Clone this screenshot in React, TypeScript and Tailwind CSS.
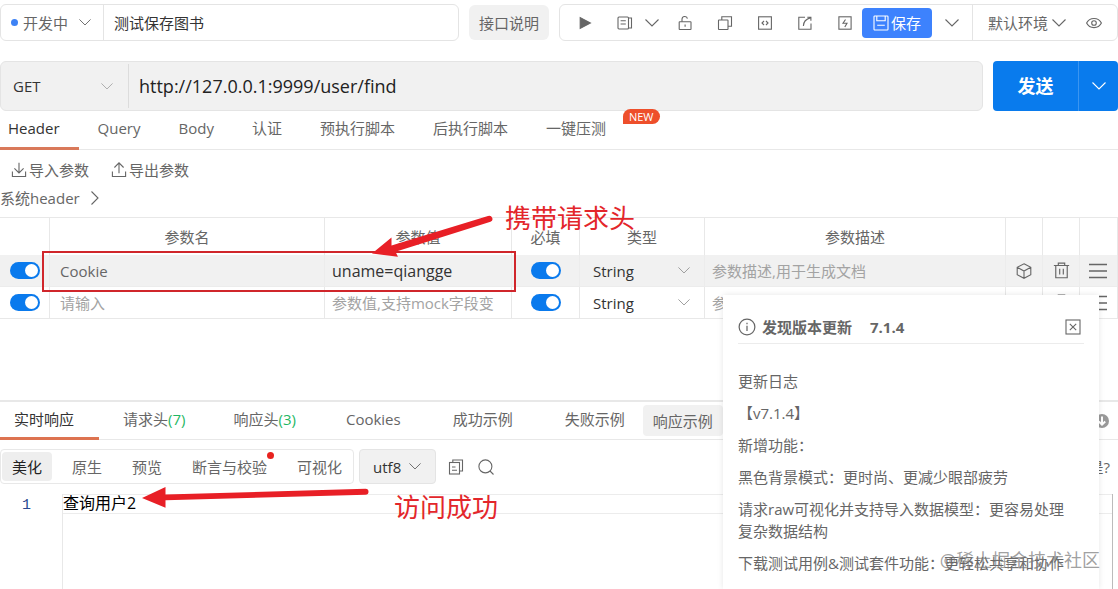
import React from "react";
import clsx from "clsx";

type IconProps = { className?: string; children: React.ReactNode };

const Icon = ({ className, children }: IconProps) => (
  <svg
    viewBox="0 0 16 16"
    fill="none"
    stroke="currentColor"
    strokeWidth="1.1"
    aria-hidden="true"
    className={clsx("shrink-0", className ?? "size-4")}
  >
    {children}
  </svg>
);

const Chevron = ({ className }: { className?: string }) => (
  <svg
    viewBox="0 0 14 8"
    fill="none"
    stroke="currentColor"
    strokeWidth="1.1"
    aria-hidden="true"
    className={clsx("shrink-0", className)}
  >
    <path d="M0.5 0.5 7 7l6.5-6.5" />
  </svg>
);

const PlayIcon = () => (
  <Icon>
    <path d="M3.2 2.6v10.8L13.4 8z" fill="currentColor" />
  </Icon>
);

const DocIcon = () => (
  <Icon>
    <rect x="1" y="2" width="10.5" height="12" rx="1" />
    <path d="M3.6 5.8h5.2M3.6 9h5.2M11.5 3h3v10h-3" />
  </Icon>
);

const LockIcon = () => (
  <Icon>
    <rect x="2.2" y="6.8" width="11.8" height="7.7" rx="0.5" />
    <path d="M5 6.8V4.2c0-3.2 5-3.6 5.4-.6M8.1 9.6v2.2" />
  </Icon>
);

const CopyIcon = () => (
  <Icon>
    <rect x="1.5" y="5" width="9.5" height="9.5" rx="0.5" />
    <path d="M4.8 5V1.8h9.7v9.4H11" />
  </Icon>
);

const CodeIcon = () => (
  <Icon>
    <rect x="1.6" y="1.8" width="12.8" height="12.4" />
    <path d="M7 6 5 8l2 2M9 6l2 2-2 2" />
  </Icon>
);

const ShareIcon = () => (
  <Icon>
    <path d="M8 2.3H1.8v11.9H14V8.5M6.4 11c0-4.5 2.5-7 7.4-8.4M10.3 2.3h3.6v3.4" />
  </Icon>
);

const BoltIcon = () => (
  <Icon>
    <rect x="1.9" y="1.8" width="12.2" height="12.4" />
    <path d="M8.5 4.5 6 8.3h4L7.8 12" />
  </Icon>
);

const SaveIcon = () => (
  <Icon>
    <rect x="1" y="1" width="14" height="14" rx="0.8" />
    <path d="M3.8 1v4.8h8.4V1M4.2 10.3h7.6" />
  </Icon>
);

const EyeIcon = () => (
  <Icon>
    <path d="M.6 8C3.6 1.9 12.4 1.9 15.4 8 12.4 14.1 3.6 14.1.6 8z" />
    <circle cx="8" cy="8" r="2.3" />
  </Icon>
);

const ImportIcon = () => (
  <Icon>
    <path d="M8 .8v10M3.4 6.3 8 10.9l4.6-4.6M1.4 9.5v5h13.2v-5" />
  </Icon>
);

const ExportIcon = () => (
  <Icon>
    <path d="M8 11.3V1M3.4 5.5 8 .9l4.6 4.6M1.4 9.5v5h13.2v-5" />
  </Icon>
);

const CubeIcon = () => (
  <Icon>
    <path d="M8 .8 14.8 4.3v7.4L8 15.3 1.2 11.7V4.3zM1.2 4.3 8 8l6.8-3.7M8 8v7.3" />
  </Icon>
);

const TrashIcon = () => (
  <Icon className="size-[17px]">
    <path d="M.8 3.3h14.4M5 3.3V1h6v2.3M2.6 3.3v11.5h10.8V3.3M6.3 6.3v5.5M9.7 6.3v5.5" />
  </Icon>
);

const MenuIcon = () => (
  <svg viewBox="0 0 18 16" fill="none" stroke="currentColor" strokeWidth="1.3" aria-hidden="true" className="h-4 w-[18px]">
    <path d="M0 1.5h18M0 8h18M0 14.5h18" />
  </svg>
);

const CloseIcon = () => (
  <Icon>
    <rect x="1" y="1" width="14" height="14" />
    <path d="m4.8 4.8 6.4 6.4M11.2 4.8l-6.4 6.4" />
  </Icon>
);

const InfoIcon = () => (
  <Icon className="size-[18px]">
    <circle cx="8" cy="8" r="7" />
    <path d="M8 6.8v4.8M8 4.2v1.3" />
  </Icon>
);

const CopyTextIcon = () => (
  <Icon>
    <path d="M4.8 3.5V1h9.7v11h-2.7" />
    <rect x="1.5" y="3.5" width="10" height="11.5" />
    <path d="M4 8h3.5M4 11.3h5" />
  </Icon>
);

const SearchIcon = () => (
  <Icon>
    <circle cx="7.4" cy="7.4" r="6.5" />
    <path d="m12 12 3.5 3.5" />
  </Icon>
);

const DownloadIcon = () => (
  <Icon>
    <circle cx="8" cy="8" r="7" fill="currentColor" stroke="none" />
    <path d="M8 3.5v8M4.8 8.5 8 11.7l3.2-3.2" stroke="#fff" strokeWidth="2" />
  </Icon>
);

const IconButton = ({ label, className, children }: { label: string; className?: string; children: React.ReactNode }) => (
  <button type="button" aria-label={label} className={clsx("flex items-center", className)}>
    {children}
  </button>
);

type SelectProps = { label: string; value: string; className?: string; chevron: string };

const Select = ({ label, value, className, chevron }: SelectProps) => (
  <span className="relative flex h-full items-center">
    <select aria-label={label} defaultValue={value} className={clsx("h-full appearance-none outline-none", className)}>
      <option>{value}</option>
    </select>
    <Chevron className={clsx("pointer-events-none absolute", chevron)} />
  </span>
);

const Switch = ({ label }: { label: string }) => (
  <input
    type="checkbox"
    role="switch"
    aria-label={label}
    defaultChecked
    className="block h-[17px] w-[30px] appearance-none rounded-full bg-gray-300 p-[2px] before:block before:size-[13px] before:rounded-full before:bg-white checked:bg-[#0a7aed] checked:before:ml-[13px]"
  />
);

const REQUEST_TABS = ["Header", "Query", "Body", "认证", "预执行脚本", "后执行脚本", "一键压测"];

const RESPONSE_TABS = [
  { label: "实时响应" },
  { label: "请求头", count: 7 },
  { label: "响应头", count: 3 },
  { label: "Cookies" },
  { label: "成功示例" },
  { label: "失败示例" },
];

const VIEW_MODES = ["美化", "原生", "预览", "断言与校验", "可视化"];

const PARAMS = [
  { name: "Cookie", value: "uname=qiangge" },
  { name: "", value: "" },
];

const CHANGELOG = [
  "更新日志",
  "【v7.1.4】",
  "新增功能：",
  "黑色背景模式：更时尚、更减少眼部疲劳",
  "请求raw可视化并支持导入数据模型：更容易处理复杂数据结构",
  "下载测试用例&测试套件功能：更轻松共享和协作",
];

const TopBar = () => (
  <header className="flex h-[37px] gap-[10px]">
    <div className="flex min-w-0 flex-1 rounded-md border border-[#e4e4e4]">
      <div className="flex items-center border-r border-[#e4e4e4] pl-[10px]">
        <span className="size-[7px] rounded-full bg-[#3d82f5]" />
        <Select label="接口状态" value="开发中" className="w-[85px] pl-[5px]" chevron="right-3 w-3" />
      </div>
      <input
        aria-label="接口名称"
        defaultValue="测试保存图书"
        className="min-w-0 flex-1 px-[10px] text-[#333] outline-none"
      />
    </div>
    <button type="button" className="my-px rounded-md bg-[#f1f1f1] px-[10px]">
      接口说明
    </button>
    <div className="flex items-center rounded-md border border-[#e4e4e4] pl-[17px]">
      <div className="flex items-center gap-6">
        <IconButton label="运行"><PlayIcon /></IconButton>
        <IconButton label="文档" className="-mr-1.5 gap-3">
          <DocIcon />
          <Chevron className="w-[14px]" />
        </IconButton>
        <IconButton label="锁定"><LockIcon /></IconButton>
        <IconButton label="复制"><CopyIcon /></IconButton>
        <IconButton label="代码"><CodeIcon /></IconButton>
        <IconButton label="分享"><ShareIcon /></IconButton>
        <IconButton label="快捷"><BoltIcon /></IconButton>
      </div>
      <button type="button" className="ml-[9px] flex h-[30px] w-[70px] items-center justify-center gap-0.5 rounded bg-[#3d82fd] text-white">
        <SaveIcon />
        保存
      </button>
      <IconButton label="更多保存选项" className="px-[13px]">
        <Chevron className="w-[14px]" />
      </IconButton>
      <div className="flex h-full items-center border-l border-[#e4e4e4] pr-[15px]">
        <Select label="环境" value="默认环境" className="w-[113px] pl-[15px]" chevron="right-5 w-[14px]" />
        <IconButton label="查看环境"><EyeIcon /></IconButton>
      </div>
    </div>
  </header>
);

const UrlBar = () => (
  <div className="mt-5 flex h-[50px] gap-[10px]">
    <div className="flex min-w-0 flex-1 rounded-md border border-[#e4e4e4] bg-[#f1f1f1]">
      <div className="my-0.5 border-r border-[#dcdcdc]">
        <Select label="请求方法" value="GET" className="w-[127px] pl-3 text-[#333]" chevron="right-[15px] w-3 text-[#aaa]" />
      </div>
      <input
        aria-label="请求地址"
        defaultValue="http://127.0.0.1:9999/user/find"
        className="min-w-0 flex-1 px-[10px] text-lg text-[#222] outline-none"
      />
    </div>
    <div className="flex overflow-hidden rounded bg-[#097bed] text-white">
      <button type="button" className="w-[85px] text-lg font-bold">
        发送
      </button>
      <button type="button" aria-label="更多发送选项" className="flex w-10 items-center justify-center border-l border-[#3a95f1]">
        <Chevron className="w-[14px]" />
      </button>
    </div>
  </div>
);

const RequestTabs = () => (
  <nav className="flex h-[39px] border-b border-[#e8e8e8]">
    {REQUEST_TABS.map((tab, index) => (
      <button
        key={tab}
        type="button"
        className={clsx(
          "relative -mb-px border-b-[3px] px-[19px] pb-0.5",
          index === 0 ? "border-[#d9795a] pl-2 text-[#333]" : "border-transparent",
        )}
      >
        {tab}
        {tab === "一键压测" && (
          <span className="absolute -top-0.5 left-24 h-[15px] rounded-full rounded-bl-none bg-[#ee4f2b] px-1.5 text-[11px] leading-[15px] text-white">
            NEW
          </span>
        )}
      </button>
    ))}
  </nav>
);

const ParamsTable = () => (
  <table className="w-full table-fixed border-separate border-spacing-0 border-t border-r border-[#e8e8e8]">
    <colgroup>
      <col className="w-[49px]" />
      <col className="w-[275px]" />
      <col className="w-[187px]" />
      <col className="w-[68px]" />
      <col className="w-[125px]" />
      <col />
      <col className="w-[37px]" />
      <col className="w-[37px]" />
      <col className="w-[38px]" />
    </colgroup>
    <thead>
      <tr className="h-[37px] [&>*+*]:border-l [&>*]:border-[#e8e8e8] [&>*]:p-0 [&>*]:font-normal">
        <td />
        <th>参数名</th>
        <th>参数值</th>
        <th>必填</th>
        <th>类型</th>
        <th>参数描述</th>
        <td />
        <td />
        <td />
      </tr>
    </thead>
    <tbody>
      {PARAMS.map((param, index) => (
        <tr
          key={index}
          className={clsx(
            "h-8 [&>*+*]:border-l [&>*]:border-b [&>*]:p-0",
            index === 0 ? "bg-[#f1f1f1] [&>*]:border-[#ececec]" : "[&>*]:border-[#e8e8e8]",
          )}
        >
          <td className="pl-[10px]!">
            <Switch label="启用" />
          </td>
          <td>
            <input aria-label="参数名" defaultValue={param.name} placeholder="请输入" className="w-full px-[10px] outline-none placeholder:text-[#a3a3a3]" />
          </td>
          <td>
            <input
              aria-label="参数值"
              defaultValue={param.value}
              placeholder="参数值,支持mock字段变"
              className={clsx("w-full px-[7px] text-[#333] outline-none placeholder:text-[#a3a3a3]", param.value && "text-base")}
            />
          </td>
          <td>
            <div className="flex justify-center">
              <Switch label="必填" />
            </div>
          </td>
          <td>
            <Select label="类型" value="String" className="w-full pl-[13px] text-[#333]" chevron="right-[14px] w-3 text-[#999]" />
          </td>
          <td>
            <input aria-label="参数描述" placeholder="参数描述,用于生成文档" className="w-full px-[7px] outline-none placeholder:text-[#a3a3a3]" />
          </td>
          <td><IconButton label="模型" className="w-full justify-center"><CubeIcon /></IconButton></td>
          <td><IconButton label="删除" className="w-full justify-center"><TrashIcon /></IconButton></td>
          <td><IconButton label="排序" className="w-full pl-[9px]"><MenuIcon /></IconButton></td>
        </tr>
      ))}
    </tbody>
  </table>
);

const ResponseTabs = () => (
  <nav className="mt-[81px] flex h-10 items-stretch border-t-2 border-b border-[#e8e8e8]">
    {RESPONSE_TABS.map(({ label, count }, index) => (
      <button
        key={label}
        type="button"
        className={clsx(
          "-mb-px border-b-[3px] pb-0.5",
          index === 0 ? "border-[#dd7350] pr-[25px] pl-[14px] text-[#333]" : "border-transparent",
          index > 0 && (count ? "px-6" : "px-[26px]"),
        )}
      >
        {label}
        {count && <span className="text-[#1fb864]">({count})</span>}
      </button>
    ))}
    <button type="button" className="my-[3px] mr-auto -ml-2 rounded bg-[#f1f1f1] px-[10px]">
      响应示例
    </button>
    <IconButton label="下载" className="mr-2 text-[#999]">
      <DownloadIcon />
    </IconButton>
  </nav>
);

const ResponseToolbar = () => (
  <div className="mt-[9px] flex h-[35px] items-center">
    <div className="flex h-full items-center gap-[10px] rounded border border-[#e8e8e8] px-px py-0.5">
      {VIEW_MODES.map((mode, index) => (
        <button
          key={mode}
          type="button"
          className={clsx("relative h-full rounded px-[10px]", index === 0 && "bg-[#eee] text-[#222]")}
        >
          {mode}
          {mode === "断言与校验" && <span className="absolute top-0 right-[3px] size-[7px] rounded-full bg-[#e8231f]" />}
        </button>
      ))}
    </div>
    <div className="ml-[5px] h-full rounded border border-[#e4e4e4] bg-[#f1f1f1]">
      <Select label="编码" value="utf8" className="w-[75px] pl-[13px] text-[#333]" chevron="right-[14px] w-3" />
    </div>
    <IconButton label="复制响应" className="ml-3"><CopyTextIcon /></IconButton>
    <IconButton label="搜索" className="ml-[14px]"><SearchIcon /></IconButton>
    <span className="mr-2 ml-auto">是?</span>
  </div>
);

const ResponseBody = () => (
  <div className="mt-[10px] flex flex-1">
    <div className="w-[62px] pl-[22px] font-['Liberation_Mono','Noto_Sans_CJK_SC',monospace] leading-6 text-[#2b4a90]">1</div>
    <pre className="flex-1 border-l border-[#e8e8e8] text-base text-black">
      <code className="block h-5 border-y border-[#ececec] font-['Open_Sans','Noto_Sans_CJK_SC',sans-serif] leading-4">查询用户2</code>
    </pre>
    <div className="w-[6px] border-l border-[#bbb]" />
  </div>
);

const UpdateNotice = () => (
  <aside className="absolute top-[295px] right-[19px] bottom-0 w-[376px] overflow-hidden bg-white px-[15px] pt-[15px] shadow-[0_0_6px_rgba(0,0,0,0.1)]">
    <div className="flex h-[34px] items-center border-b border-[#ececec] pr-[3px] font-bold">
      <InfoIcon />
      <h2 className="ml-1.5">发现版本更新</h2>
      <span className="ml-[18px]">7.1.4</span>
      <IconButton label="关闭" className="ml-auto">
        <CloseIcon />
      </IconButton>
    </div>
    <div className="mt-[26px] space-y-[10px] pr-3 leading-[22px]">
      {CHANGELOG.map((line) => (
        <p key={line}>{line}</p>
      ))}
    </div>
  </aside>
);

// Hand-drawn marks that float over the page
const Annotations = () => (
  <div className="pointer-events-none absolute inset-0 overflow-hidden text-[26px] leading-8 text-[#e3262b]">
    <div className="absolute top-[251px] left-[42px] h-[41px] w-[474px] border-2 border-[#d0262b]" />
    <svg width="520" height="520" aria-hidden="true" className="absolute top-0 left-0 text-[#e81f26]" fill="currentColor">
      <path d="M372 253.5 391.5 237.5l0 8 96.5-29.5a3 3 0 0 1 2.5 5.8l-95 30 2.5 5z" />
      <path d="M142 498 165.5 487l0 7.5 200-5.8a3 3 0 0 1 0 6l-200 5.5 0 7.5z" />
    </svg>
    <p className="absolute top-[202px] left-[505px]">携带请求头</p>
    <p className="absolute top-[491px] left-[394px]">访问成功</p>
    <p className="absolute top-[544px] right-[18px] text-lg leading-8 text-[#777]/70">@稀土掘金技术社区</p>
  </div>
);

export default function App() {
  return (
    <div className="relative flex min-h-screen flex-col bg-white pt-1 font-['Open_Sans','Noto_Sans_CJK_SC',sans-serif] text-[15px] leading-5 text-[#666]">
      <TopBar />
      <UrlBar />
      <RequestTabs />
      <div className="mt-[6px] flex h-7 items-center gap-[22px] pl-[11px]">
        <button type="button" className="flex items-center gap-0.5">
          <ImportIcon />
          导入参数
        </button>
        <button type="button" className="flex items-center gap-0.5">
          <ExportIcon />
          导出参数
        </button>
      </div>
      <button type="button" className="mb-[5px] flex h-7 items-center gap-2 self-start">
        系统header
        <Chevron className="w-[14px] -rotate-90" />
      </button>
      <ParamsTable />
      <ResponseTabs />
      <ResponseToolbar />
      <ResponseBody />
      <UpdateNotice />
      <Annotations />
    </div>
  );
}
